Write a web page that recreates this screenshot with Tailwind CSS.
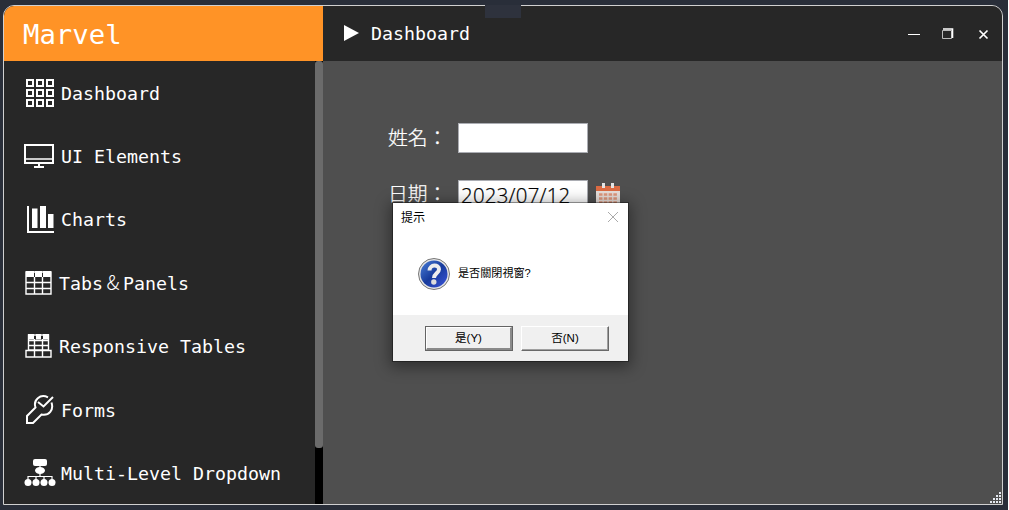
<!DOCTYPE html>
<html lang="zh-Hant"><head><meta charset="utf-8"><title>Marvel</title>
<script src="https://cdn.jsdelivr.net/npm/@tailwindcss/browser@4"></script></head>
<body class="w-[1009px] h-[510px] overflow-hidden bg-[#292e39] font-['DejaVu_Sans_Mono','Noto_Sans_CJK_TC',monospace] text-white">
<div class="relative w-[1009px] h-[510px] pt-[5px] pl-[3px] border-r border-white">
<div class="w-[1000px] h-[500px] border border-[#d0d0d0] rounded-[11px_11px_0_0] overflow-hidden flex bg-[#4f4f4f]">
  <aside class="w-[319px] flex flex-col bg-[#272727]">
    <div class="h-[55px] shrink-0 bg-[#ff9326] pl-[19px] pt-[3px] flex items-center text-[27.3px] leading-none"><span>Marvel</span></div>
    <div class="flex flex-1 min-h-0">
      <nav class="flex-1 text-[18.27px] whitespace-nowrap">
        <div class="h-[63.3px] pl-5 flex items-center gap-[5px]">
          <svg class="w-8 h-8" viewBox="0 0 32 32" fill="none" stroke="#fff" stroke-width="2"><path d="M3 3h6v6H3zM13 3h6v6h-6zM23 3h6v6h-6zM3 13h6v6H3zM13 13h6v6h-6zM23 13h6v6h-6zM3 23h6v6H3zM13 23h6v6h-6zM23 23h6v6h-6z"/></svg>
          <span class="pt-[2px]">Dashboard</span></div>
        <div class="h-[63.3px] pl-5 flex items-center gap-[5px]">
          <svg class="w-8 h-8" viewBox="0 0 32 32" fill="none" stroke="#fff" stroke-width="2"><path d="M1 5h28v18H1zM10 27h10M15 23v4"/><path d="M1 19h28" stroke-width="1.500"/></svg>
          <span class="pt-[2px]">UI Elements</span></div>
        <div class="h-[63.3px] pl-5 flex items-center gap-[5px]">
          <svg class="w-8 h-8" viewBox="0 0 32 32" fill="#fff"><path d="M3 3h2v25h25v2H3zM8 5.500h5.500V25H8zM16 3h6v22h-6zM24 11h5.500v14H24z"/></svg>
          <span class="pt-[1px]">Charts</span></div>
        <div class="h-[63.3px] pl-5 flex items-center gap-[3px]">
          <svg class="w-8 h-8" viewBox="0 0 32 32" fill="none" stroke="#fff" stroke-width="1.400"><path d="M2 5h25v22H2zM2 15.500h25M2 21.500h25M10.500 10v17M18.500 10v17"/><path fill="#fff" stroke="none" d="M2 4h8v6H2zM11 4h7v6h-7zM19 4h8v6h-8z"/></svg>
          <span class="flex items-center pt-[2px]">Tabs<span class="w-[20px] pb-1 text-center leading-none text-[20px] font-light font-['Noto_Sans_CJK_TC']">&amp;</span>Panels</span></div>
        <div class="h-[63.3px] pl-5 flex items-center gap-[3px]">
          <svg class="w-8 h-8" viewBox="0 0 32 32" fill="none" stroke="#fff" stroke-width="1.400"><path d="M4.500 5h20v15h-20zM2 20.500h25V27H2zM4 10.500h21M4 15.500h21M10.500 9v18M18.500 9v18"/><path fill="#fff" stroke="none" d="M4 4h6v5.500H4zM12 4h5v5.500h-5zM19 4h6v5.500h-6z"/></svg>
          <span class="pt-[2px]">Responsive Tables</span></div>
        <div class="h-[63.3px] pl-5 flex items-center gap-[5px]">
          <svg class="w-8 h-8 mt-[2px]" viewBox="0 0 32 32" fill="none" stroke="#fff" stroke-width="2"><path d="M24 3.300C16 -.5 9 6 11.500 13.500L3 22v7h6l8.500-8.500C25 22 30 16 27.500 8.500M14 8l5.500 4.500L29 3"/></svg>
          <span class="pt-[3px]">Forms</span></div>
        <div class="h-[63.3px] pl-5 flex items-center gap-[5px]">
          <svg class="w-8 h-8 mt-1" viewBox="0 0 32 32" fill="#fff"><rect x="9" y="1" width="14" height="7" rx="2"/><ellipse cx="16" cy="12.500" rx="5" ry="3.500"/><circle cx="4" cy="24.500" r="3.500"/><circle cx="12" cy="24.500" r="3.500"/><circle cx="20" cy="24.500" r="3.500"/><circle cx="28" cy="24.500" r="3.500"/><path d="M4 23v-4.500h24V23M12 18.500V23M20 18.500V23M16 7v11" fill="none" stroke="#fff" stroke-width="1.200"/></svg>
          <span class="pt-[2px]">Multi-Level Dropdown</span></div>
      </nav>
      <div class="w-2 bg-black"><div class="h-[387px] rounded-[3px] bg-[#6b6b6b]"></div></div>
    </div>
  </aside>
  <main class="flex-1 flex flex-col">
    <header class="h-[55px] shrink-0 bg-[#272727] flex items-center pl-[21px]">
      <svg class="w-[15px] h-4 -mt-[2px]" viewBox="0 0 15 16"><path d="M0 0v16l15-8z" fill="#fff"/></svg>
      <span class="ml-3 text-[18.27px]">Dashboard</span>
      <svg class="ml-auto w-[84px] h-4 mr-[11px] -mt-[2px]" viewBox="0 0 84 16" fill="none" stroke="#fff"><path d="M1 9.500h12"/><path d="M35.500 5.500h9v8h-9z" stroke="#bbb"/><path d="M36 4h9.500v9" stroke-width="1.600"/><path d="m72.500 5.500 8 8m0-8-8 8" stroke-width="1.700"/></svg>
    </header>
    <form class="pt-[62px] pl-[65px] font-['Noto_Sans_CJK_TC',sans-serif]">
      <div class="flex h-[30px] items-center mb-[27px]"><label class="w-[70px] pb-[3px] text-[19.8px] font-light [-webkit-text-stroke:0.25px_white]">姓名：</label><div class="w-[130px] h-[30px] bg-white border border-[#abadb3]"></div></div>
      <div class="flex h-[30px] items-center"><label class="w-[70px] pb-[5px] text-[19.8px] font-light [-webkit-text-stroke:0.25px_white]">日期：</label><div class="w-[130px] h-[30px] bg-white border border-[#abadb3] text-black font-['Open_Sans'] font-light [-webkit-text-stroke:0.25px_black] text-[20.4px] tracking-[0.25px] leading-[28px] pl-[2px]">2023/07/12</div>
      <svg class="ml-2 w-6 h-[26px] mt-[2px]" viewBox="0 0 24 26"><path d="M0 3h24v23H0z" fill="#e8dfda"/><path d="M0 3h24v5H0z" fill="#dc6b43"/><path d="M6 0h3v5H6zM15 0h3v5h-3z" fill="#e3e3e3"/><path d="M3 11.500h18M3 15.500h18M3 19.500h18" stroke="#df987d" stroke-width="2.500" stroke-dasharray="3.500 1.300"/></svg></div>
    </form>
  </main>
</div>
<div class="absolute left-[485px] top-0 w-9 h-[18px] bg-[#292e39]"><div class="mt-[5px] h-[13px] bg-[#2e323d]"></div></div>
<svg class="absolute left-[989px] top-[491px] w-3 h-3" viewBox="0 0 12 12" fill="#e4e8f0"><path d="M10 1h2v2h-2zM7 4h2v2H7zM10 4h2v2h-2zM4 7h2v2H4zM7 7h2v2H7zM10 7h2v2h-2zM1 10h2v2H1zM4 10h2v2H4zM7 10h2v2H7zM10 10h2v2h-2z"/></svg>
<section class="absolute left-[393px] top-[203px] w-[235px] h-[158px] flex flex-col bg-white text-black text-[12px] font-['Liberation_Sans','Noto_Sans_CJK_TC',sans-serif] shadow-[0_3px_14px_3px_rgba(0,0,0,0.4),0_0_0_1px_rgba(0,0,0,0.35)]">
  <div class="h-[28px] flex items-center justify-between pl-2 pr-[10px]"><span class="pt-[2px]">提示</span><svg class="w-[10px] h-[10px]" viewBox="0 0 10 10"><path d="m0 0 10 10m0-10L0 10" stroke="#aaa"/></svg></div>
  <div class="flex-1 flex items-start pt-[26px] pl-[24px] text-[11.1px]">
    <svg class="w-[33px] h-[33px]" viewBox="0 0 33 33"><defs><linearGradient id="b" x2="1" y2="1"><stop stop-color="#4c80d8"/><stop offset=".5" stop-color="#173b9c"/><stop offset="1" stop-color="#3c55dc"/></linearGradient></defs><circle cx="17" cy="17" r="15.500" fill="#e6e6e6" stroke="#777"/><circle cx="17" cy="17" r="13.500" fill="url(#b)"/><path d="M12.500 13.500c.2-6.500 9.500-6.200 9.500-1.200 0 4-5 4.200-5 8.700" fill="none" stroke="#eee" stroke-width="4"/><circle cx="16.800" cy="25" r="2.700" fill="#ddd"/></svg>
    <span class="ml-2 mt-[8px] whitespace-nowrap leading-[17px]">是否關閉視窗?</span>
  </div>
  <div class="h-[46px] bg-[#f0f0f0] flex pt-[11px] pl-8 gap-2 text-[11.5px]">
    <div class="w-[88px] h-[25px] border border-[#646464]"><div class="w-full h-full flex items-center justify-center pt-[2px] border-t border-l border-t-white border-l-white border-b-2 border-r-2 border-b-[#8a8a8a] border-r-[#8a8a8a]">是(Y)</div></div>
    <div class="w-[88px] h-[25px] flex items-center justify-center border border-t-white border-l-white border-b-[#696969] border-r-[#696969] shadow-[inset_-1px_-1px_0_#a0a0a0]">否(N)</div>
  </div>
</section>
</div></body></html>
